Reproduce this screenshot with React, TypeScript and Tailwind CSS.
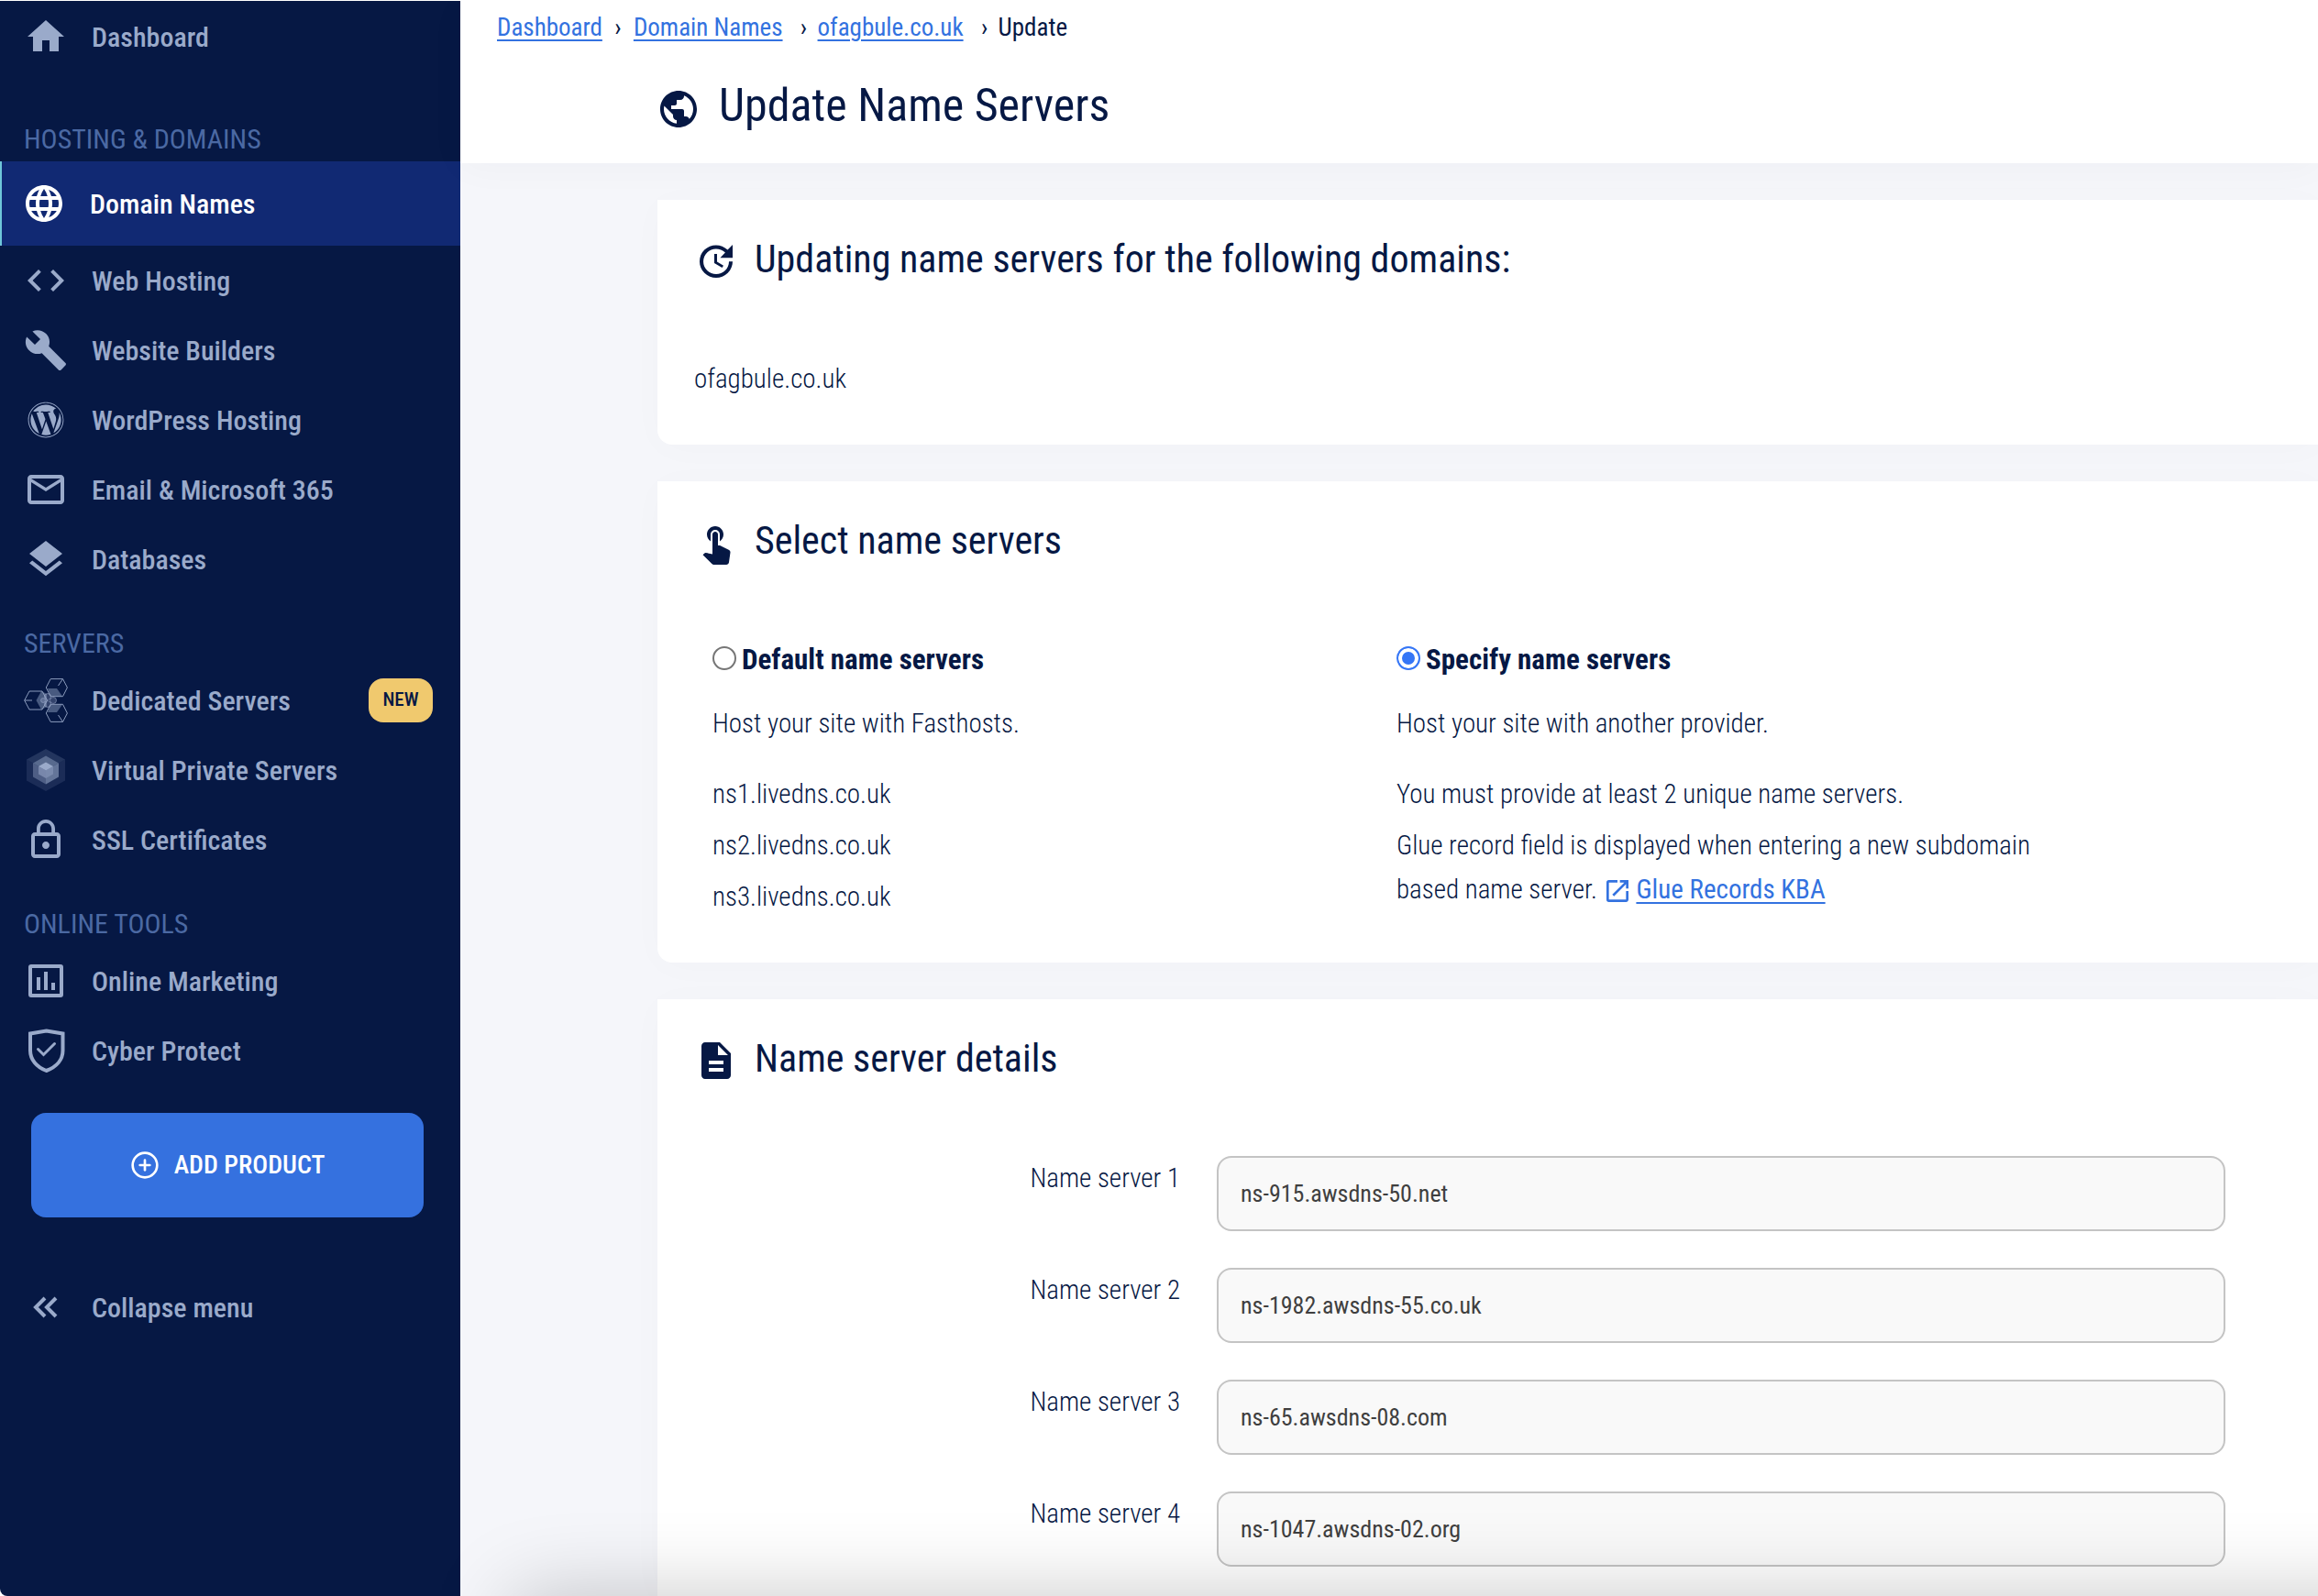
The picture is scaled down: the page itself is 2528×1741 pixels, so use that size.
import type { ReactNode } from 'react';
import {
  MdBuild,
  MdCode,
  MdDescription,
  MdHome,
  MdLanguage,
  MdLayers,
  MdLockOutline,
  MdMailOutline,
  MdOpenInNew,
  MdPublic,
  MdTouchApp,
  MdUpdate,
} from 'react-icons/md';
import { FaWordpress } from 'react-icons/fa';
import { LuCirclePlus } from 'react-icons/lu';

function ChartIcon() {
  return (
    <svg viewBox="0 0 48 48" className="size-12" aria-hidden="true">
      <rect x="7" y="8" width="34" height="32" rx="1" fill="none" stroke="currentColor" strokeWidth="4" />
      <path d="M14 20h4v14h-4zM22 14h4v20h-4zM30 26h4v8h-4z" fill="currentColor" />
    </svg>
  );
}

function ShieldIcon() {
  return (
    <svg viewBox="0 0 48 48" className="size-12" fill="none" stroke="currentColor" aria-hidden="true">
      <path d="M24.5 2.5 42.5 5.5V24c0 10-7 18-18 22C14 42 7 34 7 24V5.5z" strokeWidth="4" />
      <path d="m15.5 22.5 6 6 12-12" strokeWidth="3" strokeLinecap="round" />
    </svg>
  );
}

function DedicatedIcon() {
  return (
    <svg viewBox="0 0 48 48" className="size-12" aria-hidden="true">
      <g fill="none" stroke="currentColor" strokeWidth="1" opacity="0.9">
        <path d="M.7 24 6 14h14l5.5 10L20 34H6zM.7 24H9" />
        <path d="M24.3 10 29.2.6h13.3l4.9 9.4-4.9 9.7H29.2zM42.5.6 37.5 8" />
        <path d="M24.3 38 29.2 47.4h13.3l4.9-9.4-4.9-9.7H29.2zM42.5 47.4 37.5 40" />
      </g>
      <g fill="currentColor" opacity="0.45">
        <path d="M13.5 24 19 14l6 3v14l-6 3zM26 11h10l6 8.5H29zM26 37h10l6-8.5H29z" />
      </g>
      <g fill="currentColor" fillOpacity="0.3" stroke="currentColor" strokeOpacity="0.55">
        <circle cx="26" cy="20" r="3.5" />
        <circle cx="26" cy="28" r="3.5" />
        <circle cx="32" cy="24" r="3.5" />
        <circle cx="21" cy="24" r="2.5" />
      </g>
    </svg>
  );
}

function VpsIcon() {
  return (
    <svg viewBox="0 0 48 48" className="size-12" fill="currentColor" aria-hidden="true">
      <path d="M24 1 45 12.5 24 24 3 12.5z" opacity="0.2" />
      <path d="M3 12.5 24 24 45 12.5V35.5L24 47 3 35.5z" opacity="0.14" />
      <path d="M24 8.5 38 16.5 24 24 10 16.5z" opacity="0.45" />
      <path d="M10 16.5 24 24v15.5L10 31.5z" opacity="0.4" />
      <path d="M38 16.5 24 24v15.5l14-8z" opacity="0.58" />
      <path d="M24 15.5l8 4.5-8 4.5-8-4.5z" />
      <path d="M16 20l8 4.5V33l-8-4.5z" opacity="0.55" />
      <path d="M32 20l-8 4.5V33l8-4.5z" opacity="0.4" />
    </svg>
  );
}

function CollapseIcon() {
  return (
    <svg viewBox="0 0 48 48" className="size-12" fill="none" stroke="currentColor" strokeWidth="4" aria-hidden="true">
      <path d="M23 14 13 24l10 10M35 14 25 24l10 10" />
    </svg>
  );
}

function NavItem({ icon, label, badge }: { icon: ReactNode; label: string; badge?: string }) {
  return (
    <a href="#" className="flex h-[76px] items-center pr-[30px] pl-[26px] text-[30px] font-medium">
      <span className="mr-[26px] flex size-12 items-center justify-center">{icon}</span>
      {label}
      {badge && (
        <span className="ml-auto flex h-12 w-[70px] items-center justify-center rounded-2xl bg-[#f0c96e] text-[21px] text-[#061844]">
          {badge}
        </span>
      )}
    </a>
  );
}

function NavHeading({ children }: { children: ReactNode }) {
  return <h2 className="mt-[38px] mb-2 pl-[26px] text-[30px] leading-8 text-[#4b69a3]">{children}</h2>;
}

function Sidebar() {
  return (
    <nav className="w-[502px] shrink-0 rounded-bl-lg bg-[#061844] pt-px text-[#9aaaca]">
      <NavItem icon={<MdHome className="size-12" />} label="Dashboard" />
      <div className="h-5" />
      <NavHeading>HOSTING &amp; DOMAINS</NavHeading>
      <a
        href="#"
        aria-current="page"
        className="flex h-[92px] items-center border-l-2 border-[#6fc6d9] bg-[#112973] pl-[22px] text-[30px] font-medium text-white"
      >
        <MdLanguage className="mr-[26px] size-12" />
        Domain Names
      </a>
      <NavItem icon={<MdCode className="size-12" />} label="Web Hosting" />
      <NavItem icon={<MdBuild className="size-12" />} label="Website Builders" />
      <NavItem icon={<FaWordpress className="size-10" />} label="WordPress Hosting" />
      <NavItem icon={<MdMailOutline className="size-12" />} label="Email & Microsoft 365" />
      <NavItem icon={<MdLayers className="size-12" />} label="Databases" />
      <NavHeading>SERVERS</NavHeading>
      <NavItem icon={<DedicatedIcon />} label="Dedicated Servers" badge="NEW" />
      <NavItem icon={<VpsIcon />} label="Virtual Private Servers" />
      <NavItem icon={<MdLockOutline className="size-12" />} label="SSL Certificates" />
      <NavHeading>ONLINE TOOLS</NavHeading>
      <NavItem icon={<ChartIcon />} label="Online Marketing" />
      <NavItem icon={<ShieldIcon />} label="Cyber Protect" />
      <div className="mt-[30px] mb-[60px] pr-10 pl-[34px]">
        <button
          type="button"
          className="flex h-[114px] w-full items-center justify-center gap-4 rounded-2xl bg-[#3571df] text-[28px] font-medium text-white"
        >
          <LuCirclePlus className="size-8" />
          ADD PRODUCT
        </button>
      </div>
      <NavItem icon={<CollapseIcon />} label="Collapse menu" />
    </nav>
  );
}

const linkStyle = 'text-[#3372e0] underline decoration-2 underline-offset-4';

function Breadcrumbs() {
  return (
    <nav aria-label="Breadcrumb" className="flex h-[58px] items-center pl-10 text-[27px]">
      <a href="#" className={linkStyle}>Dashboard</a>
      <span className="w-[34px] text-center">›</span>
      <a href="#" className={linkStyle}>Domain Names</a>
      <span className="w-[38px] pl-2 text-center">›</span>
      <a href="#" className={linkStyle}>ofagbule.co.uk</a>
      <span className="w-[38px] pl-2 text-center">›</span>
      <span>Update</span>
    </nav>
  );
}

function CardTitle({ icon, children }: { icon: ReactNode; children: ReactNode }) {
  return (
    <h2 className="flex h-[130px] items-center gap-[18px] pl-10 text-[42px] leading-none">
      {icon}
      {children}
    </h2>
  );
}

const cardStyle = 'rounded-bl-2xl bg-white shadow-[0_4px_40px_rgba(6,24,68,0.02)]';
const radioStyle =
  'mr-1.5 mb-1 size-[26px] appearance-none rounded-full border-2 border-[#767676] bg-white shadow-[inset_0_0_0_4px_white] checked:border-[#3576f6] checked:bg-[#3576f6]';

const servers = ['ns-915.awsdns-50.net', 'ns-1982.awsdns-55.co.uk', 'ns-65.awsdns-08.com', 'ns-1047.awsdns-02.org'];

export default function App() {
  return (
    <div className="flex min-h-screen overflow-hidden border-t border-white bg-white font-['Roboto_Condensed',Roboto,sans-serif] text-[#061844]">
      <Sidebar />
      <main className="flex min-w-0 flex-1 flex-col bg-[#f5f6fa]">
        <header className="h-[177px] bg-white shadow-[0_4px_40px_rgba(6,24,68,0.03)]">
          <Breadcrumbs />
          <h1 className="mt-7 flex items-center gap-5 pl-[214px] text-[50px] leading-none">
            <MdPublic className="mt-2 size-12" />
            Update Name Servers
          </h1>
        </header>

        <form className="mt-10 ml-[215px] flex flex-1 flex-col gap-10">
          <section className={cardStyle}>
            <CardTitle icon={<MdUpdate className="mt-1 size-12" />}>
              Updating name servers for the following domains:
            </CardTitle>
            <p className="pt-11 pb-[51px] pl-10 text-[29px] leading-[42px] font-light">ofagbule.co.uk</p>
          </section>

          <section className={cardStyle}>
            <CardTitle icon={<MdTouchApp className="mt-1 size-12" />}>Select name servers</CardTitle>
            <div className="grid max-w-[1532px] grid-cols-2 pt-[38px] pb-12 pl-10 text-[29px] leading-12 font-light">
              <div className="px-5">
                <label className="flex items-center text-[31px] leading-[54px] font-bold">
                  <input type="radio" name="mode" className={radioStyle} />
                  Default name servers
                </label>
                <p className="mt-[18px] mb-[29px]">Host your site with Fasthosts.</p>
                <ul className="flex flex-col gap-2">
                  <li>ns1.livedns.co.uk</li>
                  <li>ns2.livedns.co.uk</li>
                  <li>ns3.livedns.co.uk</li>
                </ul>
              </div>
              <div className="px-5">
                <label className="flex items-center text-[31px] leading-[54px] font-bold">
                  <input type="radio" name="mode" defaultChecked className={radioStyle} />
                  Specify name servers
                </label>
                <p className="mt-[18px] mb-[29px]">Host your site with another provider.</p>
                <p className="mb-2">You must provide at least 2 unique name servers.</p>
                <p>
                  Glue record field is displayed when entering a new subdomain based name server.{' '}
                  <MdOpenInNew className="mr-1 inline size-8 align-middle text-[#3372e0]" />
                  <a href="#" className={`font-normal ${linkStyle}`}>Glue Records KBA</a>
                </p>
              </div>
            </div>
          </section>

          <section className="flex-1 bg-white pb-8 shadow-[0_4px_40px_rgba(6,24,68,0.02)]">
            <CardTitle icon={<MdDescription className="mt-1 size-12" />}>Name server details</CardTitle>
            <div className="mt-[41px] mr-[101px] flex flex-col gap-10">
              {servers.map((server, i) => (
                <div key={server} className="flex items-start gap-10">
                  <label htmlFor={`ns-${i}`} className="w-[570px] shrink-0 text-right text-[29px] leading-12 font-light">
                    Name server {i + 1}
                  </label>
                  <input
                    id={`ns-${i}`}
                    type="text"
                    defaultValue={server}
                    className="h-[82px] min-w-0 flex-1 rounded-2xl border-2 border-[#c4c4c4] bg-[#f9f9f9] px-6 text-[26px] text-[#3f3f3f]"
                  />
                </div>
              ))}
            </div>
          </section>
        </form>
      </main>
      <div className="pointer-events-none fixed top-full -right-52 left-[560px] h-40 shadow-[0_0_90px_rgba(0,0,0,0.22)]" />
    </div>
  );
}
